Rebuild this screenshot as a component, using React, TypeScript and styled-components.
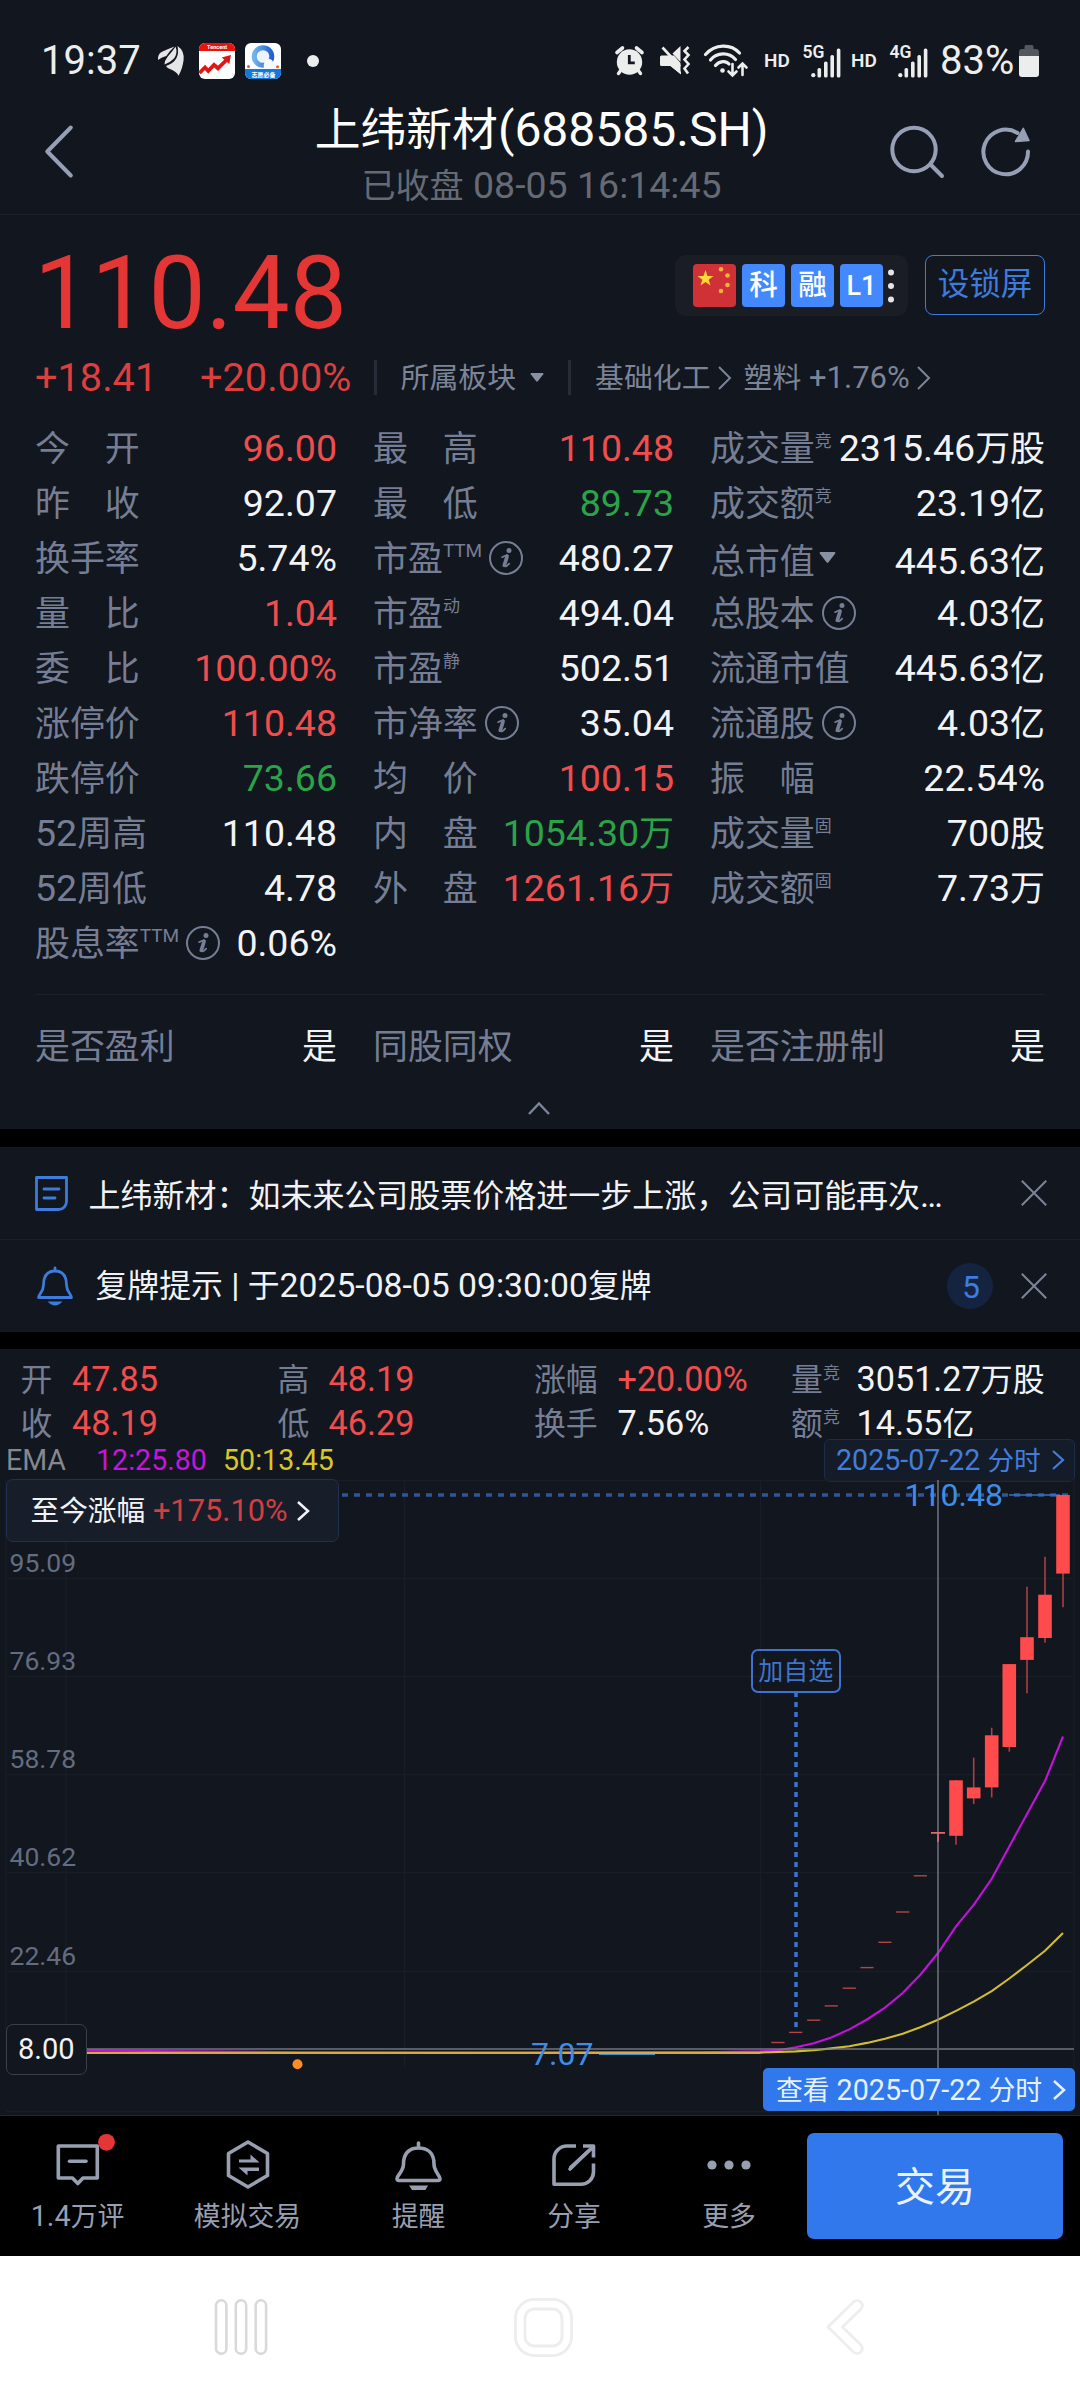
import React from "react";
import styled, { createGlobalStyle } from "styled-components";

const GlobalStyle = createGlobalStyle`
  * { box-sizing: border-box; }
  html, body { margin: 0; padding: 0; background: #12161e; }
  body {
    font-family: Roboto, "Noto Sans CJK SC", sans-serif;
    font-kerning: none;
    color: #f0f2f6;
  }
  svg { display: block; flex: none; overflow: visible; }
`;

const color = {
  bg: "#12161e",
  label: "#757e94",
  white: "#f1f3f7",
  red: "#f04e4e",
  price: "#e33635",
  green: "#2ba348",
  blue: "#3d7bdc",
  accent: "#3078ec",
  icon: "#969fb5",
  line: "#1b2029",
};
type Tone = "white" | "red" | "green";

/* Ideographs are set slightly smaller than the Latin digits beside them. */
const Han = styled.span<{ $r: number }>`
  font-size: ${(p) => p.$r}em;
  line-height: 0;
`;
const HAN = /([\u3000-\u303f\u4e00-\u9fff\uff00-\uffef]+)/;
const Mixed = ({ children, ratio = 0.932 }: { children: string; ratio?: number }) => (
  <>
    {children.split(HAN).map((part, i) =>
      i % 2 ? (
        <Han key={i} $r={ratio}>
          {part}
        </Han>
      ) : (
        part
      )
    )}
  </>
);

const Screen = styled.main`
  width: 1080px;
  height: 2400px;
  display: flex;
  flex-direction: column;
  background: ${color.bg};
  overflow: hidden;
  white-space: nowrap;
`;

/* ---------- status bar ---------- */
const StatusBar = styled.header`
  height: 92px;
  padding: 29px 41px 0 41px;
  display: flex;
  align-items: center;
  justify-content: space-between;
  color: #eceeee;
`;
const StatusGroup = styled.div`
  display: flex;
  align-items: center;
`;
const StatusText = styled.span<{ $w: number }>`
  width: ${(p) => p.$w}px;
  font-size: 40px;
  line-height: 48px;
`;
const Spacer = styled.i<{ $w: number }>`
  width: ${(p) => p.$w}px;
`;
const Hd = styled.span`
  width: 27px;
  font-size: 19px;
  font-weight: 600;
  line-height: 22px;
`;
const Dot = styled.i`
  width: 12px;
  height: 12px;
  border-radius: 50%;
  background: #eceeee;
`;

const Signal = ({ label }: { label: string }) => (
  <svg width="38" height="34" viewBox="0 0 38 34" fill="#eceeee">
    <text x="-0.5" y="14" fontSize="17.5" fontWeight="600" fontFamily="Roboto, sans-serif">
      {label}
    </text>
    <circle cx="10.3" cy="31.2" r="2.1" />
    <rect x="14.5" y="24" width="3.6" height="9.5" rx="1.6" />
    <rect x="21" y="17.5" width="3.6" height="16" rx="1.6" />
    <rect x="27.4" y="11" width="3.6" height="22.5" rx="1.6" />
    <rect x="33.8" y="4.5" width="3.6" height="29" rx="1.6" />
  </svg>
);

const Status = () => (
  <StatusBar>
    <StatusGroup>
      <StatusText $w={100}>19:37</StatusText>
      <Spacer $w={17} />
      <svg width="27" height="31" viewBox="0 0 27 31" fill="#e3e5e6">
        <path d="M0 15Q-.5 9 4 6.800 10 4 16.500 1.500 11.500 6 8.300 11 4 11.800 0 15Z" />
        <path d="M17.600 1.800Q20 8 16 13.500 11.500 18 6.500 19.500 6.500 15.500 9.800 11.500 13.500 7.500 17.600 1.800Z" />
        <path d="M19.500 1Q26.500 5.500 25.600 15 24.500 24 20.500 30.700 18.500 26.500 10.800 23.600 9 22.500 8 21 15.500 18.500 18.500 13 21 8 19.500 1Z" />
      </svg>
      <Spacer $w={14} />
      <svg width="36" height="36" viewBox="0 0 36 36">
        <rect width="36" height="36" rx="6" fill="#fff" />
        <path d="M6 0H30A6 6 0 0 1 36 6V8H0V6A6 6 0 0 1 6 0Z" fill="#e9120c" />
        <text x="18" y="6.400" fontSize="5.500" fontWeight="700" fill="#fff" textAnchor="middle" fontFamily="Roboto, sans-serif">
          Tencent
        </text>
        <path d="M.5 30L6 24.500 9.300 28 15 21.800 19 25.300 28 16.500" fill="none" stroke="#dd1712" strokeWidth="3.800" />
        <path d="M32 12L22.700 14.500 30.300 21Z" fill="#dd1712" />
      </svg>
      <Spacer $w={10} />
      <svg width="36" height="36" viewBox="0 0 36 36">
        <defs>
          <linearGradient id="ring" x1="0" x2="1">
            <stop offset="0" stopColor="#6fb4ef" />
            <stop offset="1" stopColor="#2560cf" />
          </linearGradient>
        </defs>
        <rect width="36" height="36" rx="6" fill="#fff" />
        <circle cx="18" cy="13.500" r="8.800" fill="#eef4fb" stroke="url(#ring)" strokeWidth="5" />
        <path d="M19 25.500C18 20 20 17 24 16 26 16 27.500 17 28 19 30 19.500 31 21 31 26H19Z" fill="#f5f9fd" />
        <path d="M0 26H36V30A6 6 0 0 1 30 36H6A6 6 0 0 1 0 30Z" fill="#1477dc" />
        <circle cx="3.500" cy="23.500" r="1.500" fill="#d8584a" />
        <circle cx="32.500" cy="23.800" r="1.500" fill="#d8584a" />
        <text x="18.500" y="33.600" fontSize="6" fontWeight="700" fill="#fff" textAnchor="middle" fontFamily="'Noto Sans CJK SC', sans-serif">
          志愿必备
        </text>
      </svg>
      <Spacer $w={26} />
      <Dot />
    </StatusGroup>
    <StatusGroup>
      <svg width="29" height="29" viewBox="0 0 29 29" fill="#eceeee">
        <circle cx="14.500" cy="16" r="12.700" />
        <path d="M2 6.500L7.500 2M27 6.500L21.500 2" stroke="#eceeee" strokeWidth="3.600" strokeLinecap="round" />
        <path d="M6 24L3.500 27.500M23 24L25.500 27.500" stroke="#eceeee" strokeWidth="3.400" strokeLinecap="round" />
        <path d="M14.300 9V16.800H19.800" fill="none" stroke={color.bg} strokeWidth="2.800" />
      </svg>
      <Spacer $w={16} />
      <svg width="30" height="29" viewBox="0 0 30 29" fill="#eceeee">
        <path d="M1.500 9.500H6L21 26V28.500L10.500 20H1.500A1.500 1.500 0 0 1 0 18.500V11A1.500 1.500 0 0 1 1.500 9.500Z" />
        <path d="M12.500 7.500L20.500 0V16Z" />
        <path d="M2.500 1.500L20 20.500" stroke="#eceeee" strokeWidth="2.600" />
        <path d="M6 9.500H14L20.500 17V28L10.500 20H6Z" />
        <path d="M28.500 1L24.500 5 28.500 9 24.500 13.500 28.500 18 24.500 22.500 28 27.500" fill="none" stroke="#eceeee" strokeWidth="2.600" />
      </svg>
      <Spacer $w={14} />
      <svg width="44" height="34" viewBox="0 0 44 34" fill="none" stroke="#eceeee" strokeLinecap="round">
        <path d="M1.500 10.500C11 -.5 27 -.5 35.500 9M6.500 16C13 8 25 8 31.500 15.500M11.500 21.500C15.500 16.500 22 16.500 25 20" strokeWidth="3.200" />
        <circle cx="18.500" cy="26.500" r="2.300" fill="#eceeee" stroke="none" />
        <path d="M28.500 20V31M24.500 27.500L28.500 31.500 32.500 27.500M38.500 31V20M34.500 23.500L38.500 19.500 42.500 23.500" strokeWidth="2.600" />
      </svg>
      <Spacer $w={16} />
      <Hd>HD</Hd>
      <Spacer $w={12} />
      <Signal label="5G" />
      <Spacer $w={10} />
      <Hd>HD</Hd>
      <Spacer $w={12} />
      <Signal label="4G" />
      <Spacer $w={12} />
      <StatusText $w={79}>83%</StatusText>
      <svg width="20" height="32" viewBox="0 0 20 32">
        <path d="M5.500 1.500A1.500 1.500 0 0 1 7 0H13A1.500 1.500 0 0 1 14.500 1.500V4H17A3 3 0 0 1 20 7V14H0V7A3 3 0 0 1 3 4H5.500Z" fill="#54575e" />
        <path d="M0 11H20V29A3 3 0 0 1 17 32H3A3 3 0 0 1 0 29Z" fill="#eceeee" />
      </svg>
    </StatusGroup>
  </StatusBar>
);

/* ---------- title bar ---------- */
const TitleBar = styled.div`
  height: 123px;
  padding: 0 50px 0 45px;
  display: grid;
  grid-template-columns: 200px 1fr 200px;
  border-bottom: 1px solid ${color.line};
`;
const BackSlot = styled.div`
  padding-top: 33px;
`;
const Actions = styled.div`
  padding-top: 32px;
  display: flex;
  justify-content: flex-end;
  gap: 36px;
`;
const Titles = styled.div`
  padding: 9.500px 0 0 0;
  display: flex;
  flex-direction: column;
  align-items: center;
  margin-left: 8px;
`;
const Title = styled.h1`
  margin: 0;
  font-size: 48px;
  font-weight: 400;
  line-height: 56px;
  color: #fff;
`;
const Subtitle = styled.div`
  margin-top: 4px;
  font-size: 37.500px;
  line-height: 46px;
  color: #666a75;
`;

/* ---------- quote panel ---------- */
const Quote = styled.section`
  height: 914px;
  padding: 0 35px;
  display: flex;
  flex-direction: column;
`;
const PriceRow = styled.div`
  height: 132px;
  display: flex;
  align-items: flex-start;
`;
const Price = styled.div`
  flex: 1;
  margin: 29px 0 0 -1px;
  font-size: 101.800px;
  line-height: 100px;
  color: ${color.price};
`;
const Badges = styled.div`
  width: 233px;
  height: 61px;
  margin: 40px 17px 0 0;
  padding: 0 14px 0 18px;
  display: flex;
  align-items: center;
  gap: 6px;
  border-radius: 11px;
  background: #1a1d23;
`;
const Badge = styled.span<{ $latin?: boolean }>`
  width: 43px;
  height: 43px;
  border-radius: 4px;
  background: #4488fd;
  color: #fff;
  font-size: ${(p) => (p.$latin ? 27 : 28.500)}px;
  font-weight: 500;
  line-height: ${(p) => (p.$latin ? 44 : 43)}px;
  text-align: center;
`;
const LockButton = styled.button`
  width: 120px;
  height: 60px;
  margin: 40px 0 0;
  padding: 0;
  border: 1.500px solid ${color.blue};
  border-radius: 8px;
  background: none;
  color: ${color.blue};
  font: 400 31.500px/58px Roboto, "Noto Sans CJK SC", sans-serif;
`;
const ChangeRow = styled.div`
  height: 60px;
  padding-top: 1px;
  display: flex;
  align-items: center;
  color: #7c8498;
  font-size: 31px;
  line-height: 40px;
`;
const Change = styled.span<{ $w: number }>`
  width: ${(p) => p.$w}px;
  font-size: 39.700px;
  line-height: 60px;
  color: #dd3e3e;
`;
const Rule = styled.i<{ $l: number; $r: number }>`
  width: 3px;
  height: 35px;
  margin: 0 ${(p) => p.$r}px 0 ${(p) => p.$l}px;
  background: #272c39;
`;
const Stats = styled.div<{ $top?: number }>`
  margin-top: ${(p) => p.$top ?? 0}px;
  display: grid;
  grid-template-columns: 302px 301px 1fr;
  column-gap: 36px;
`;
const StatColumn = styled.div`
  display: flex;
  flex-direction: column;
`;
const StatRow = styled.div<{ $drop?: boolean }>`
  height: 55px;
  padding-top: ${(p) => (p.$drop ? 6 : 0)}px;
  display: flex;
  align-items: center;
  font-size: 37.500px;
  line-height: 48px;
`;
const StatLabel = styled.span`
  display: flex;
  align-items: center;
  flex: 1;
  color: ${color.label};
`;
const Sup = styled.span<{ $latin?: boolean; $rise: number }>`
  font-size: ${(p) => (p.$latin ? 19 : 17)}px;
  line-height: 0;
  vertical-align: ${(p) => p.$rise}px;
`;
const Value = styled.span<{ $tone: Tone }>`
  color: ${(p) => color[p.$tone]};
`;
const Divider = styled.hr`
  width: 100%;
  height: 1px;
  margin: 24px 0 23px;
  border: 0;
  background: ${color.line};
`;
const Collapse = styled.div`
  display: flex;
  justify-content: center;
  padding: 29px 0 0 0;
  margin-left: -3px;
`;

const Info = () => (
  <svg width="34" height="34" viewBox="0 0 34 34" style={{ marginLeft: 7 }}>
    <circle cx="17" cy="17" r="16" fill="none" stroke={color.label} strokeWidth="2" />
    <circle cx="20" cy="9.400" r="2.500" fill={color.label} />
    <path d="M13 16.200C15.500 14.800 17.500 14 18.600 14.400 20.200 15 17 21.500 16.200 24.500 15.700 26.500 18 25 20.200 22.600" fill="none" stroke={color.label} strokeWidth="1.700" strokeLinecap="round" />
    <path d="M18 15L15 24.500" stroke={color.label} strokeWidth="3.200" strokeLinecap="round" />
  </svg>
);
const Caret = ({ w, h, ml, mt = 0 }: { w: number; h: number; ml: number; mt?: number }) => (
  <svg width={w} height={h} viewBox="0 0 17 11" style={{ marginLeft: ml, marginTop: mt }}>
    <path d="M1.500 0H15.500Q17 .3 16.200 1.600L9.500 10.200Q8.500 11.300 7.500 10.200L.8 1.600Q0 .3 1.500 0Z" fill="#8890a4" />
  </svg>
);
const Chevron = ({ w, h, stroke, sw = 2, ml = 0, mr = 0 }: { w: number; h: number; stroke: string; sw?: number; ml?: number; mr?: number }) => (
  <svg width={w} height={h} viewBox={`0 0 ${w} ${h}`} style={{ marginLeft: ml, marginRight: mr }}>
    <path d={`M1 1L${w - 1} ${h / 2}L1 ${h - 1}`} fill="none" stroke={stroke} strokeWidth={sw} />
  </svg>
);

type Stat = { l: string; v: string; t?: Tone; sup?: string; info?: boolean; caret?: boolean };
const stats: Stat[][] = [
  [
    { l: "今　开", v: "96.00", t: "red" },
    { l: "昨　收", v: "92.07" },
    { l: "换手率", v: "5.74%" },
    { l: "量　比", v: "1.04", t: "red" },
    { l: "委　比", v: "100.00%", t: "red" },
    { l: "涨停价", v: "110.48", t: "red" },
    { l: "跌停价", v: "73.66", t: "green" },
    { l: "52周高", v: "110.48" },
    { l: "52周低", v: "4.78" },
    { l: "股息率", v: "0.06%", sup: "TTM", info: true },
  ],
  [
    { l: "最　高", v: "110.48", t: "red" },
    { l: "最　低", v: "89.73", t: "green" },
    { l: "市盈", v: "480.27", sup: "TTM", info: true },
    { l: "市盈", v: "494.04", sup: "动" },
    { l: "市盈", v: "502.51", sup: "静" },
    { l: "市净率", v: "35.04", info: true },
    { l: "均　价", v: "100.15", t: "red" },
    { l: "内　盘", v: "1054.30万", t: "green" },
    { l: "外　盘", v: "1261.16万", t: "red" },
  ],
  [
    { l: "成交量", v: "2315.46万股", sup: "竞" },
    { l: "成交额", v: "23.19亿", sup: "竞" },
    { l: "总市值", v: "445.63亿", caret: true },
    { l: "总股本", v: "4.03亿", info: true },
    { l: "流通市值", v: "445.63亿" },
    { l: "流通股", v: "4.03亿", info: true },
    { l: "振　幅", v: "22.54%" },
    { l: "成交量", v: "700股", sup: "固" },
    { l: "成交额", v: "7.73万", sup: "固" },
  ],
];
const flags: Stat[] = [
  { l: "是否盈利", v: "是" },
  { l: "同股同权", v: "是" },
  { l: "是否注册制", v: "是" },
];

const StatLine = ({ s }: { s: Stat }) => (
  <StatRow $drop={s.caret}>
    <StatLabel>
      <span>
        <Mixed>{s.l}</Mixed>
        {s.sup && (
          <Sup $latin={s.sup === "TTM"} $rise={14}>
            {s.sup}
          </Sup>
        )}
      </span>
      {s.info && <Info />}
      {s.caret && <Caret w={17} h={11} ml={4} mt={-7} />}
    </StatLabel>
    <Value $tone={s.t ?? "white"}>
      <Mixed>{s.v}</Mixed>
    </Value>
  </StatRow>
);

/* ---------- notices ---------- */
const Band = styled.div<{ $h: number }>`
  height: ${(p) => p.$h}px;
  background: #000;
`;
const Notice = styled.div<{ $line?: boolean }>`
  height: ${(p) => (p.$line ? 93 : 92)}px;
  padding: 0 33px 0 35px;
  display: flex;
  align-items: center;
  border-bottom: ${(p) => (p.$line ? `1px solid ${color.line}` : "0")};
`;
const NoticeText = styled.span<{ $ml: number; $dy: number; $size: number }>`
  flex: 1;
  margin-left: ${(p) => p.$ml}px;
  padding-top: ${(p) => p.$dy}px;
  font-size: ${(p) => p.$size}px;
  line-height: 44px;
`;
const Count = styled.span`
  width: 46px;
  height: 46px;
  margin-right: 28px;
  padding-left: 2px;
  border-radius: 50%;
  background: #14233f;
  color: #3d7ce0;
  font-size: 32px;
  line-height: 48px;
  text-align: center;
`;
const Close = () => (
  <svg width="26" height="26" viewBox="0 0 26 26">
    <path d="M.8 .8L25.200 25.200M25.200 .8L.8 25.200" stroke="#7c8499" strokeWidth="2" />
  </svg>
);

/* ---------- candle details ---------- */
const Details = styled.section`
  height: 131px;
  padding-top: 7.500px;
`;
const DetailGrid = styled.div`
  padding-left: 20.500px;
  display: grid;
  grid-template-columns: 257px 256.500px 257px 1fr;
  grid-auto-rows: 44px;
  font-size: 34.200px;
  line-height: 44px;
`;
const Detail = styled.div`
  display: flex;
`;
const DetailLabel = styled.span<{ $w: number }>`
  width: ${(p) => p.$w}px;
  color: ${color.label};
`;
const EmaRow = styled.div`
  display: flex;
  height: 42px;
  margin-top: -6px;
  padding: 0 5px 0 6px;
  font-size: 28.600px;
  line-height: 42px;
`;
const Ema = styled.span<{ $c: string; $w: number }>`
  width: ${(p) => p.$w}px;
  color: ${(p) => p.$c};
`;
const DateTag = styled.div`
  width: 251px;
  height: 43px;
  margin-left: auto;
  padding: 0 10px 0 11px;
  display: flex;
  align-items: center;
  justify-content: space-between;
  border: 1.500px solid #1d2d49;
  border-radius: 6px;
  background: #141c29;
  color: #437dd9;
  font-size: 28.600px;
  line-height: 40px;
`;

/* ---------- chart ---------- */
const Chart = styled.section`
  position: relative;
  height: 636px;
`;
const Float = styled.div<{ $x: number; $y: number; $w: number; $h: number }>`
  position: absolute;
  left: ${(p) => p.$x}px;
  top: ${(p) => p.$y}px;
  width: ${(p) => p.$w}px;
  height: ${(p) => p.$h}px;
  display: flex;
  align-items: center;
  border-radius: 7px;
`;
const Gain = styled(Float)`
  padding: 1px 0 0 24px;
  border: 1.500px solid #1f3050;
  background: #171e2a;
  font-size: 30.800px;
  line-height: 40px;
  color: #f1f3f7;
  em { font-style: normal; color: #d03f42; }
`;
const PriceTag = styled(Float)`
  justify-content: center;
  border: 1.500px solid #3a3f4e;
  background: ${color.bg};
  font-size: 29px;
  line-height: 40px;
`;
const Watch = styled(Float)`
  justify-content: center;
  padding-top: 2px;
  border: 2.500px solid #3b73cf;
  color: #3f75cc;
  font-size: 25px;
  line-height: 34px;
`;
const ViewTag = styled(Float)`
  justify-content: space-between;
  padding: 0 10px 0 13px;
  border-radius: 5px;
  background: ${color.accent};
  color: #e6f0ff;
  font-size: 28.700px;
  line-height: 40px;
`;

const purple: [number, number][] = [
  [87, 2050.5], [180, 2051.3], [300, 2052.2], [500, 2052.6], [700, 2052.3], [760, 2051.3], [778, 2050.3], [795.7, 2047.3], [813.7, 2043.3],
  [831.3, 2037.4], [849.3, 2029.4], [867, 2019.5], [885, 2007.6], [902.7, 1993], [920.3, 1974.7], [938, 1953],
  [956, 1926.3], [973.7, 1904.9], [991.7, 1878.8], [1009.3, 1846.4], [1027, 1814], [1045, 1781.1], [1063, 1736.5],
];
const yellow: [number, number][] = [
  [87, 2053], [500, 2053], [760, 2052.6], [795.7, 2051.4], [813.7, 2050.2], [831.3, 2048.4], [849.3, 2046.3], [867, 2042.9],
  [885, 2038.7], [902.7, 2033.7], [920.3, 2027.3], [938, 2019.8], [956, 2010.9], [973.7, 2001.7], [991.7, 1991.1],
  [1009.3, 1978.5], [1027, 1965], [1045, 1950.7], [1063, 1933],
];
/* centre, body top, body bottom, wick top, wick bottom */
const candles = [
  [956, 1780.3, 1835.8, 1780, 1844.7],
  [973.7, 1787.4, 1798.4, 1757.6, 1803.9],
  [991.7, 1735.3, 1787.4, 1727.7, 1797.5],
  [1009.3, 1664.1, 1747, 1664, 1751.7],
  [1027, 1637.2, 1659.9, 1586.7, 1693.2],
  [1045, 1594.7, 1638, 1556.8, 1642.7],
  [1063, 1495, 1573.6, 1495, 1607.3],
];
const limits = [
  [920.3, 1875.8], [902.7, 1912], [885, 1942.3], [867, 1967.6], [849.3, 1988.2], [831.3, 2005.9], [813.7, 2020.2], [795.7, 2032.4], [778, 2042.5],
];
const axis: [string, number][] = [["95.09", 1578.5], ["76.93", 1676.5], ["58.78", 1774.5], ["40.62", 1872.5], ["22.46", 1971.5]];
const line = (pts: [number, number][]) => pts.map((p) => p.join(",")).join(" ");

const Plot = () => (
  <svg width="1080" height="636" viewBox="0 1480 1080 636" fontFamily="Roboto, sans-serif">
    <g stroke="#181d26" strokeWidth="1.500">
      {[1480.5, ...axis.map((a) => a[1]), 2111.5].map((y) => (
        <path key={y} d={`M6 ${y}H1074`} />
      ))}
      {[6, 66, 404.5, 760.5, 1074].map((x) => (
        <path key={x} d={`M${x} 1480V2068`} />
      ))}
    </g>
    <path d="M0 2115.500H1080" stroke="#23272f" />
    <g fill="#646c80" fontSize="26.500">
      {axis.map(([t, y]) => (
        <text key={t} x="9.500" y={y - 7}>
          {t}
        </text>
      ))}
    </g>
    <path d="M342 1495H1069" stroke="#2f5596" strokeWidth="3.500" strokeDasharray="6 6" />
    <path d="M1009 1495H1060" stroke="#3672c4" strokeWidth="1.300" />
    <path d="M796 1692V2033" stroke="#3b73cf" strokeWidth="3.500" strokeDasharray="5 5" />
    <path d="M599 2054.300H655" stroke="#3d8bd6" strokeWidth="1.500" />
    {candles.map(([x, t, b, wt, wb]) => (
      <g key={x}>
        <path d={`M${x} ${wt}V${wb}`} stroke="#a94043" strokeWidth="1.600" />
        <rect x={x - 6.8} y={t} width="13.600" height={b - t} fill="#ff4b4b" />
      </g>
    ))}
    {limits.map(([x, y]) => (
      <path key={x} d={`M${x - 6.6} ${y}H${x + 6.6}`} stroke="#b54545" strokeWidth="1.400" />
    ))}
    <polyline points={line(purple)} fill="none" stroke="#c312dd" strokeWidth="2.100" />
    <polyline points={line(yellow)} fill="none" stroke="#d2bd30" strokeWidth="2.100" />
    <path d="M87 2052.800H760" stroke="#dba83f" strokeWidth="2.200" />
    <g fill="#3f8ce8" fontSize="32">
      <text x="904.500" y="1506">110.48</text>
      <text x="531" y="2065">7.07</text>
    </g>
    <path d="M87 2049H1074M938 1480V2115" stroke="#7d8290" strokeOpacity=".65" strokeWidth="2" />
    <path d="M931 1832.900H945M938 1832V1842" stroke="#e06a6c" strokeWidth="1.600" />
    <circle cx="297.500" cy="2064.300" r="5" fill="#fb8c28" />
  </svg>
);

/* ---------- bottom bars ---------- */
const Toolbar = styled.nav`
  height: 140px;
  display: grid;
  grid-template-columns: 155px 185px 157px 154px 156px 256px;
  background: #000;
`;
const Tool = styled.div`
  padding-top: 24px;
  display: flex;
  flex-direction: column;
  align-items: center;
  color: #989fb0;
  font-size: 28.800px;
  line-height: 40px;
`;
const ToolIcon = styled.div`
  height: 56px;
`;
const TradeButton = styled.button`
  height: 106px;
  margin-top: 17px;
  padding: 3px 0 0;
  border: 0;
  border-radius: 7px;
  background: ${color.accent};
  color: #eaf2ff;
  font: 400 40px/103px Roboto, "Noto Sans CJK SC", sans-serif;
`;
const SystemNav = styled.footer`
  flex: 1;
  padding: 0 216px 2px 214px;
  display: flex;
  align-items: center;
  justify-content: space-between;
  background: #fff;
`;
const HomeSlot = styled.div`
  margin-right: 7px;
`;

const toolSvg = { width: 50, height: 50, viewBox: "0 0 50 50", fill: "none", stroke: "#989fb0", strokeWidth: 3.6, strokeLinejoin: "round" as const, strokeLinecap: "round" as const };
const tools: [string, React.ReactNode][] = [
  [
    "1.4万评",
    <svg {...toolSvg}>
      <path d="M5.300 6H44.300V38H30L24.800 43.500 19.500 38H5.300Z" />
      <path d="M16.500 21.300H33" />
      <circle cx="53.500" cy="2.300" r="8.400" fill="#e33735" stroke="none" />
    </svg>,
  ],
  [
    "模拟交易",
    <svg {...toolSvg}>
      <path d="M25 2L44.500 13.500V35.500L25 47 5.500 35.500V13.500Z" />
      <path d="M16 22.500V19.500H27.500V14.500L36.500 22.500Z" fill="#989fb0" stroke="none" />
      <path d="M36 27.500V31H24.500V35.500L15.500 27.500Z" fill="#989fb0" stroke="none" />
    </svg>,
  ],
  [
    "提醒",
    <svg {...toolSvg}>
      <path d="M24.500 3V8M9.500 24C9.500 13 15.500 8 24.500 8S40 13 40 24C40 31.500 46 35.500 46 38.500Q46 40.500 44 40.500H5Q3 40.500 3 38.500C3 35.500 9.500 31.500 9.500 24Z" />
      <path d="M15 45.500H34L31.500 50H18Z" fill="#989fb0" stroke="none" />
    </svg>,
  ],
  [
    "分享",
    <svg {...toolSvg}>
      <path d="M27 6H18A13 13 0 0 0 5 19V44.300H32A12.500 12.500 0 0 0 44.500 32V23.500" strokeLinecap="butt" />
      <path d="M34 6H44.500V17.500M44 7L21 28" strokeLinecap="butt" />
      <path d="M40 10.500L21 29" />
    </svg>,
  ],
  [
    "更多",
    <svg {...toolSvg}>
      <g fill="#989fb0" stroke="none">
        <circle cx="8" cy="25" r="4.600" />
        <circle cx="25" cy="25" r="4.600" />
        <circle cx="42" cy="25" r="4.600" />
      </g>
    </svg>,
  ],
];

const details: [string, string, Tone, number, string?][] = [
  ["开", "47.85", "red", 51.5],
  ["高", "48.19", "red", 51],
  ["涨幅", "+20.00%", "red", 83.5],
  ["量", "3051.27万股", "white", 65.5, "竞"],
  ["收", "48.19", "red", 51.5],
  ["低", "46.29", "red", 51],
  ["换手", "7.56%", "white", 83.5],
  ["额", "14.55亿", "white", 65.5, "竞"],
];

export default function App() {
  return (
    <>
      <GlobalStyle />
      <Screen>
        <Status />
        <TitleBar>
          <BackSlot>
            <svg width="28" height="53" viewBox="0 0 28 53">
              <path d="M25.800 2.500L2.300 26.500 25.800 50.500" fill="none" stroke={color.icon} strokeWidth="4" strokeLinecap="round" strokeLinejoin="round" />
            </svg>
          </BackSlot>
          <Titles>
            <Title>
              <Mixed ratio={0.955}>上纬新材(688585.SH)</Mixed>
            </Title>
            <Subtitle>
              <Mixed ratio={0.91}>已收盘 08-05 16:14:45</Mixed>
            </Subtitle>
          </Titles>
          <Actions>
            <svg width="54" height="54" viewBox="0 0 54 54" fill="none" stroke={color.icon} strokeWidth="4" strokeLinecap="round">
              <circle cx="24" cy="25.500" r="21.700" />
              <path d="M40.500 40.500L52 52" />
            </svg>
            <svg width="50" height="54" viewBox="0 0 50 54" fill="none" stroke={color.icon} strokeWidth="4" strokeLinecap="round">
              <path d="M48 27.500A22.300 22.300 0 1 1 37.500 9" />
              <path d="M43.300 4.300L49 16.500 35.500 17.500Z" fill={color.icon} strokeWidth="1.500" strokeLinejoin="round" />
            </svg>
          </Actions>
        </TitleBar>

        <Quote>
          <PriceRow>
            <Price>110.48</Price>
            <Badges>
              <svg width="43" height="43" viewBox="0 0 43 43">
                <rect width="43" height="43" rx="4" fill="#cf3136" />
                <path d="M12.500 6L14.500 12H20.500L15.700 15.700 17.500 21.500 12.500 18 7.500 21.500 9.300 15.700 4.500 12H10.500Z" fill="#ffd83a" />
                <g fill="#f2b33c">
                  <circle cx="28" cy="5.300" r="2.300" />
                  <circle cx="34.500" cy="11.500" r="2.300" />
                  <circle cx="34.500" cy="21" r="2.300" />
                  <circle cx="28" cy="27" r="2.300" />
                </g>
              </svg>
              <Badge>科</Badge>
              <Badge>融</Badge>
              <Badge $latin>L1</Badge>
              <svg width="6" height="34" viewBox="0 0 6 34" fill="#e4e5e8" style={{ marginLeft: -1 }}>
                <circle cx="3" cy="3.500" r="3" />
                <circle cx="3" cy="17" r="3" />
                <circle cx="3" cy="30.500" r="3" />
              </svg>
            </Badges>
            <LockButton>设锁屏</LockButton>
          </PriceRow>
          <ChangeRow>
            <Change $w={165}>+18.41</Change>
            <Change $w={152}>+20.00%</Change>
            <Rule $l={22} $r={23.5} />
            <Mixed>所属板块</Mixed>
            <Caret w={14} h={9} ml={14} />
            <Rule $l={24} $r={24} />
            <Mixed>基础化工</Mixed>
            <Chevron w={13} h={24} stroke="#7c8498" ml={7} mr={13} />
            <span>
              <Mixed>塑料 +1.76%</Mixed>
            </span>
            <Chevron w={13} h={24} stroke="#7c8498" ml={7} />
          </ChangeRow>
          <Stats $top={13}>
            {stats.map((col, i) => (
              <StatColumn key={i}>
                {col.map((s, j) => (
                  <StatLine key={j} s={s} />
                ))}
              </StatColumn>
            ))}
          </Stats>
          <Divider />
          <Stats>
            {flags.map((s) => (
              <StatLine key={s.l} s={s} />
            ))}
          </Stats>
          <Collapse>
            <svg width="22" height="13" viewBox="0 0 22 13">
              <path d="M1 12L11 1.500 21 12" fill="none" stroke="#7c8498" strokeWidth="2.500" />
            </svg>
          </Collapse>
        </Quote>

        <Band $h={18} />
        <Notice $line>
          <svg width="33" height="35" viewBox="0 0 33 35" fill="none" stroke={color.blue} strokeWidth="2.800" strokeLinecap="round">
            <path d="M1.500 1.500H31.500V25.500A8 8 0 0 1 23.500 33.500H1.500Z" strokeLinejoin="round" />
            <path d="M9 13H24M9 22H20" />
          </svg>
          <NoticeText $ml={20.5} $dy={3} $size={34}>
            <Mixed ratio={0.941}>上纬新材：如未来公司股票价格进一步上涨，公司可能再次…</Mixed>
          </NoticeText>
          <Close />
        </Notice>
        <Notice>
          <svg width="40" height="40" viewBox="0 0 40 40" fill="none" stroke={color.blue} strokeWidth="2.800" strokeLinecap="round" strokeLinejoin="round">
            <path d="M20 1.800V5M8.500 19C8.500 10 12.500 5 20 5S31.500 10 31.500 19C31.500 26 36.500 28 36.500 31.500H3.500C3.500 28 8.500 26 8.500 19Z" />
            <path d="M12.500 35.500H27.500Q20 43.500 12.500 35.500Z" fill={color.blue} stroke="none" />
          </svg>
          <NoticeText $ml={20.5} $dy={0} $size={33.7}>
            <Mixed ratio={0.945}>复牌提示 | 于2025-08-05 09:30:00复牌</Mixed>
          </NoticeText>
          <Count>5</Count>
          <Close />
        </Notice>
        <Band $h={17} />

        <Details>
          <DetailGrid>
            {details.map(([l, v, t, w, sup]) => (
              <Detail key={l}>
                <DetailLabel $w={w}>
                  <Mixed>{l}</Mixed>
                  {sup && <Sup $rise={12}>{sup}</Sup>}
                </DetailLabel>
                <Value $tone={t}>
                  <Mixed>{v}</Mixed>
                </Value>
              </Detail>
            ))}
          </DetailGrid>
          <EmaRow>
            <Ema $c="#84888f" $w={90}>EMA</Ema>
            <Ema $c="#c415de" $w={127}>12:25.80</Ema>
            <Ema $c="#d8c62a" $w={120}>50:13.45</Ema>
            <DateTag>
              <span>
                <Mixed>2025-07-22 分时</Mixed>
              </span>
              <Chevron w={12} h={20} stroke="#437dd9" sw={2.2} />
            </DateTag>
          </EmaRow>
        </Details>

        <Chart>
          <Plot />
          <Gain $x={5.5} $y={-1} $w={333} $h={62.5}>
            <span>
              <Mixed>至今涨幅 </Mixed>
              <em>+175.10%</em>
            </span>
            <Chevron w={12} h={20} stroke="#f1f3f7" sw={2.5} ml={9.5} />
          </Gain>
          <Watch $x={750.5} $y={169} $w={90.5} $h={43.5}>加自选</Watch>
          <PriceTag $x={5.5} $y={544} $w={81.5} $h={50.5}>8.00</PriceTag>
          <ViewTag $x={763} $y={588} $w={311.5} $h={43}>
            <span>
              <Mixed>查看 2025-07-22 分时</Mixed>
            </span>
            <Chevron w={12} h={20} stroke="#e6f0ff" sw={2.5} />
          </ViewTag>
        </Chart>

        <Toolbar>
          {tools.map(([name, icon]) => (
            <Tool key={name}>
              <ToolIcon>{icon}</ToolIcon>
              <span>
                <Mixed>{name}</Mixed>
              </span>
            </Tool>
          ))}
          <TradeButton>交易</TradeButton>
        </Toolbar>

        <SystemNav>
          <svg width="54" height="56" viewBox="0 0 54 56" fill="none" stroke="#d9d9d9" strokeWidth="2.600">
            <rect x="2" y="1.300" width="10.400" height="53.400" rx="5.200" />
            <rect x="21.800" y="1.300" width="10.400" height="53.400" rx="5.200" />
            <rect x="41.700" y="1.300" width="10.400" height="53.400" rx="5.200" />
          </svg>
          <HomeSlot>
            <svg width="59" height="59" viewBox="0 0 59 59" fill="none" stroke="#ededed" strokeWidth="2.800">
              <rect x="1.400" y="1.400" width="56.200" height="56.200" rx="19" />
              <rect x="11" y="11" width="37" height="37" rx="9.500" />
            </svg>
          </HomeSlot>
          <svg width="38" height="56" viewBox="0 0 38 56" fill="none" stroke="#ededed" strokeWidth="2.600" strokeLinejoin="round">
            <path d="M2 28L27.500 2.800Q31 .2 34.500 2.800 38 6 35 10L16.500 28 35 46Q38 50 34.500 53.200 31 55.800 27.500 53.200Z" />
          </svg>
        </SystemNav>
      </Screen>
    </>
  );
}
